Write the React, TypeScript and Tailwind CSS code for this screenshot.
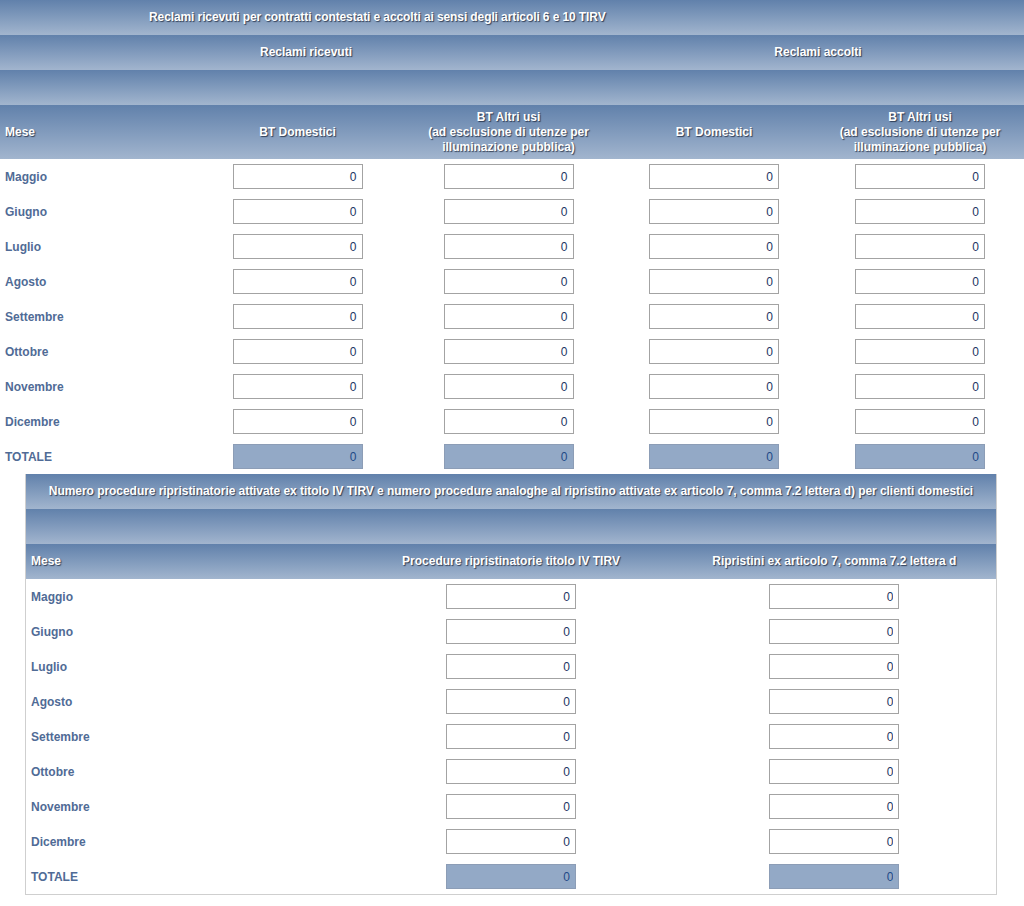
import React from "react";

const months = [
  "Maggio",
  "Giugno",
  "Luglio",
  "Agosto",
  "Settembre",
  "Ottobre",
  "Novembre",
  "Dicembre",
];

const bar = "bg-linear-to-b from-[#6181ab] to-[#a2b5ce]";
const headText =
  "text-white font-bold text-[12px] leading-[15px] [text-shadow:1px_1px_1px_rgba(20,30,50,0.75)]";
const label = "text-[#506b96] font-bold text-[12px]";

function Cell({ total = false }: { total?: boolean }) {
  return (
    <input
      readOnly
      value="0"
      className={`w-[130px] h-[25px] border text-right pr-[5px] text-[12px] outline-none ${
        total
          ? "bg-[#93a9c6] border-[#8c9db6] text-[#1f4a87]"
          : "bg-white border-[#a3a3a3] text-[#1c3563]"
      }`}
    />
  );
}

function AltriUsi() {
  return (
    <div className={`${headText} text-center`}>
      BT Altri usi
      <br />
      (ad esclusione di utenze per
      <br />
      illuminazione pubblica)
    </div>
  );
}

function ReclamiTable() {
  const cols = "grid grid-cols-[190px_215px_207px_204px_208px] items-center";
  return (
    <div className="w-[1024px]">
      <div className="flex h-[35px]">
        <div
          className={`w-[612px] ${bar} flex items-center pl-[149px] whitespace-nowrap tracking-[-0.1px] ${headText}`}
        >
          Reclami ricevuti per contratti contestati e accolti ai sensi degli articoli 6 e 10 TIRV
        </div>
        <div className={`flex-1 ${bar}`} />
      </div>
      <div className={`flex h-[35px] ${bar}`}>
        <div className={`w-[612px] flex items-center justify-center ${headText}`}>
          Reclami ricevuti
        </div>
        <div className={`flex-1 flex items-center justify-center ${headText}`}>
          Reclami accolti
        </div>
      </div>
      <div className={`h-[35px] ${bar}`} />
      <div className={`${cols} h-[54px] ${bar}`}>
        <div className={`${headText} pl-[5px]`}>Mese</div>
        <div className={`${headText} text-center`}>BT Domestici</div>
        <AltriUsi />
        <div className={`${headText} text-center`}>BT Domestici</div>
        <AltriUsi />
      </div>
      {months.map((m) => (
        <div key={m} className={`${cols} h-[35px]`}>
          <div className={`${label} pl-[5px]`}>{m}</div>
          {[0, 1, 2, 3].map((i) => (
            <div key={i} className="flex justify-center">
              <Cell />
            </div>
          ))}
        </div>
      ))}
      <div className={`${cols} h-[35px]`}>
        <div className={`${label} pl-[5px]`}>TOTALE</div>
        {[0, 1, 2, 3].map((i) => (
          <div key={i} className="flex justify-center">
            <Cell total />
          </div>
        ))}
      </div>
    </div>
  );
}

function RipristiniTable() {
  const cols = "grid grid-cols-3 items-center";
  return (
    <div className="ml-[25px] w-[972px] border-x border-b border-[#cfcfcf]">
      <div
        className={`h-[35px] ${bar} flex items-center justify-center whitespace-nowrap tracking-[-0.05px] ${headText}`}
      >
        Numero procedure ripristinatorie attivate ex titolo IV TIRV e numero procedure analoghe al ripristino attivate ex articolo 7, comma 7.2 lettera d) per clienti domestici
      </div>
      <div className={`h-[35px] ${bar}`} />
      <div className={`${cols} h-[35px] ${bar}`}>
        <div className={`${headText} pl-[5px]`}>Mese</div>
        <div className={`${headText} text-center`}>Procedure ripristinatorie titolo IV TIRV</div>
        <div className={`${headText} text-center`}>Ripristini ex articolo 7, comma 7.2 lettera d</div>
      </div>
      {months.map((m) => (
        <div key={m} className={`${cols} h-[35px]`}>
          <div className={`${label} pl-[5px]`}>{m}</div>
          <div className="flex justify-center">
            <Cell />
          </div>
          <div className="flex justify-center">
            <Cell />
          </div>
        </div>
      ))}
      <div className={`${cols} h-[35px]`}>
        <div className={`${label} pl-[5px]`}>TOTALE</div>
        <div className="flex justify-center">
          <Cell total />
        </div>
        <div className="flex justify-center">
          <Cell total />
        </div>
      </div>
    </div>
  );
}

export default function App() {
  return (
    <div className="w-[1024px] min-h-[906px] bg-white font-['Liberation_Sans',Arial,sans-serif]">
      <ReclamiTable />
      <RipristiniTable />
    </div>
  );
}
